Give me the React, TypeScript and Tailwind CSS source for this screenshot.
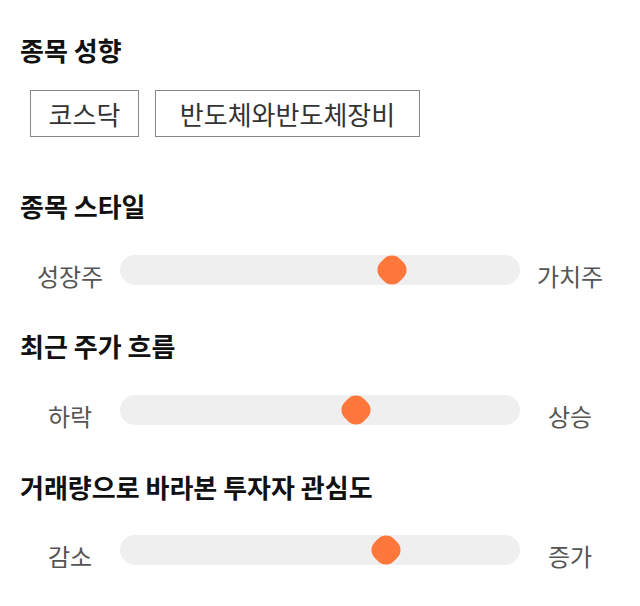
import React from 'react';

interface SliderRowProps {
  left: string;
  right: string;
  value: number; // 0..1, knob centre along the track
}

function SliderRow({ left, right, value }: SliderRowProps) {
  return (
    <div className="flex items-center">
      <span className="w-[100px] translate-y-1.5 text-center text-[24px] leading-[30px] text-[#555]">{left}</span>
      <div className="relative h-[30px] flex-1 rounded-full bg-[#efefef]">
        <span
          className="absolute top-1/2 h-[27px] w-[27px] -translate-x-1/2 -translate-y-1/2 rotate-45 rounded-[11px] bg-[#ff773b]"
          style={{ left: `${value * 100}%` }}
        />
      </div>
      <span className="w-[100px] translate-y-1.5 text-center text-[24px] leading-[30px] text-[#555]">{right}</span>
    </div>
  );
}

function Heading({ children, className = '' }: { children: React.ReactNode; className?: string }) {
  return <h2 className={`text-[26px] font-bold leading-8 text-[#111] ${className}`}>{children}</h2>;
}

export default function App() {
  return (
    <div className="min-h-[606px] bg-white px-5 pt-[34px] font-['Noto_Sans_CJK_KR','Noto_Sans',sans-serif]">
      <Heading>종목 성향</Heading>
      <div className="ml-[10px] mt-[24px] flex gap-4">
        <span className="flex h-[47px] w-[109px] items-center justify-center border border-[#888] text-[26px] text-[#333]">
          코스닥
        </span>
        <span className="flex h-[47px] w-[265px] items-center justify-center border border-[#888] text-[26px] text-[#333]">
          반도체와반도체장비
        </span>
      </div>

      <Heading className="mt-[53px]">종목 스타일</Heading>
      <div className="mt-[33px]">
        <SliderRow left="성장주" right="가치주" value={0.681} />
      </div>

      <Heading className="mt-[45px]">최근 주가 흐름</Heading>
      <div className="mt-[33px]">
        <SliderRow left="하락" right="상승" value={0.59} />
      </div>

      <Heading className="mt-[46px]">거래량으로 바라본 투자자 관심도</Heading>
      <div className="mt-[32px]">
        <SliderRow left="감소" right="증가" value={0.665} />
      </div>
    </div>
  );
}
